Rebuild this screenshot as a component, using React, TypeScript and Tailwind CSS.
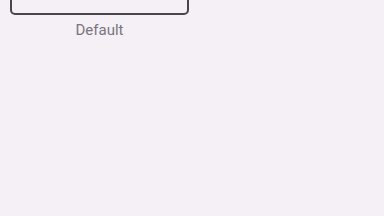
export default function App() {
  return (
    <div className="w-[384px] h-[216px] overflow-hidden bg-[#f4f0f5] font-['Roboto',sans-serif]">
      <div className="flex flex-col items-center w-[179px] ml-[10px] -mt-[41px]">
        <div className="w-full h-[56px] rounded-[5px] border-2 border-[#49454f] bg-[#f4f0f5]" />
        <span className="mt-[5px] text-[15px] leading-[20px] text-[#79747e]">Default</span>
      </div>
    </div>
  );
}
